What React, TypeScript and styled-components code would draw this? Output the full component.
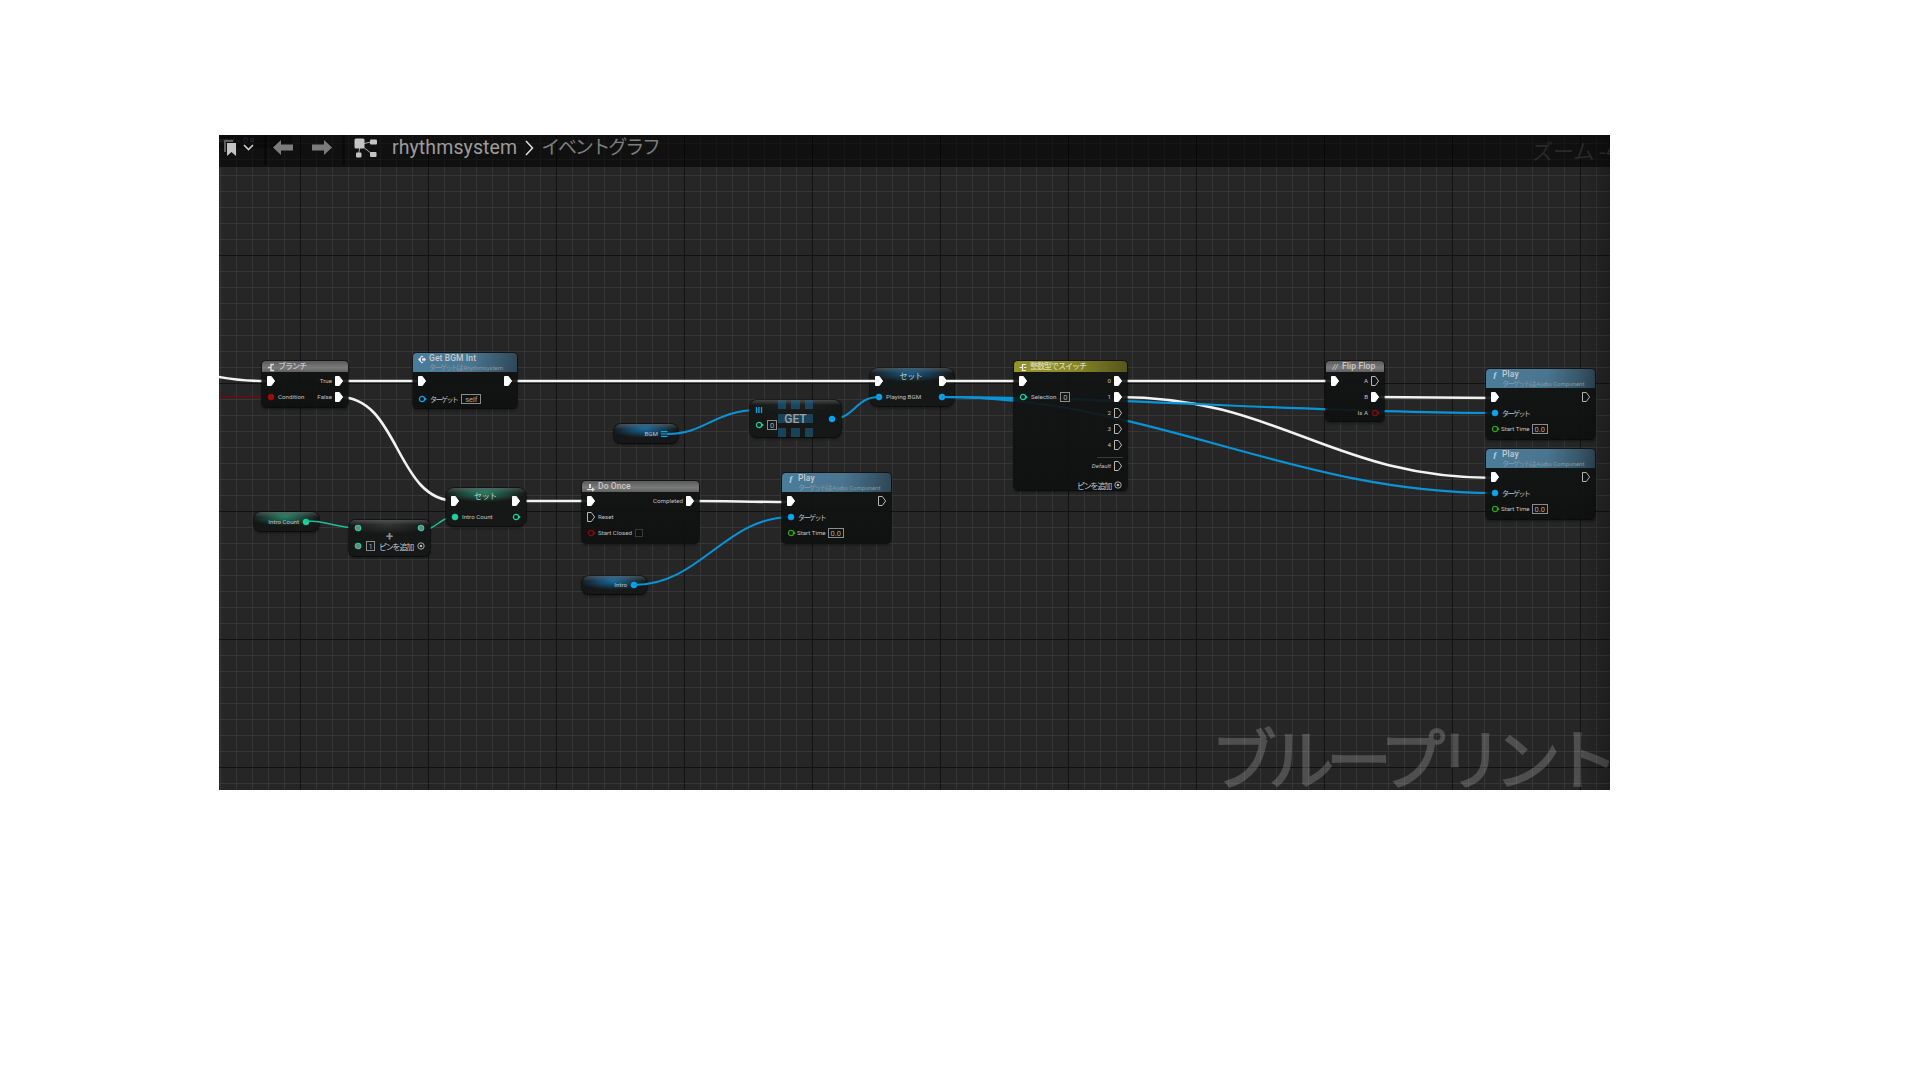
import React from 'react';
import styled, { createGlobalStyle } from 'styled-components';

// page position of the graph panel, node coordinates below are page pixels
const OX = 219;
const OY = 135;

const GlobalStyle = createGlobalStyle`
  html, body {
    margin: 0;
    background: #ffffff;
  }
  body {
    font-family: Roboto, "Noto Sans CJK JP", sans-serif;
  }
`;

const Page = styled.div`
  width: 1920px;
  height: 1080px;
  padding: ${OY}px 0 0 ${OX}px;
  box-sizing: border-box;
`;

const Canvas = styled.div`
  position: relative;
  width: 1391px;
  height: 655px;
  overflow: hidden;
  background-color: #262626;
  background-image:
    linear-gradient(to right, #121212 1px, transparent 1px),
    linear-gradient(to bottom, #121212 1px, transparent 1px),
    linear-gradient(to right, #363636 1px, transparent 1px),
    linear-gradient(to bottom, #363636 1px, transparent 1px);
  background-size: 128px 128px, 128px 128px, 16px 16px, 16px 16px;
  background-position: 81px 0, 0 120px, 1px 0, 0 8px;
  &::after {
    content: '';
    position: absolute;
    inset: 0;
    pointer-events: none;
    background: linear-gradient(to left, rgba(0, 0, 0, 0.22), transparent 30px);
  }
`;

const Toolbar = styled.div`
  position: relative;
  z-index: 3;
  display: flex;
  align-items: center;
  height: 32px;
  background: rgba(0, 0, 0, 0.56);
  padding: 0 0 7px 5px;
  box-sizing: border-box;
`;

const GhostTab = styled.div`
  position: absolute;
  left: 0;
  top: 0;
  width: 73px;
  height: 13px;
  background: rgba(0, 0, 0, 0.28);
  color: #3c3c3c;
  font-size: 6px;
  line-height: 9px;
`;

const ToolIcon = styled.svg<{ $ml?: number }>`
  position: relative;
  flex: none;
  margin-left: ${(p) => p.$ml ?? 0}px;
`;

const ToolSep = styled.div<{ $ml: number }>`
  flex: none;
  width: 3px;
  height: 30px;
  align-self: flex-start;
  margin-left: ${(p) => p.$ml}px;
  background: rgba(0, 0, 0, 0.35);
`;

const Crumb = styled.span`
  margin-left: 15px;
  font-family: Roboto, sans-serif;
  font-size: 19.5px;
  color: #9c9c9c;
  letter-spacing: 0.1px;
`;

const CrumbNow = styled.span`
  margin: 0 0 4px 7px;
  font-family: "Noto Sans CJK JP", sans-serif;
  font-size: 19px;
  line-height: 20px;
  letter-spacing: -2.2px;
  color: #7d7d7d;
`;

const Zoom = styled.span`
  position: absolute;
  right: -8px;
  top: 0;
  font-family: "Noto Sans CJK JP", sans-serif;
  font-size: 21px;
  line-height: 30px;
  white-space: nowrap;
  color: #2a2a2a;
`;

const Watermark = styled.div`
  position: absolute;
  right: 0;
  bottom: 0;
  font-family: "Noto Sans CJK JP", sans-serif;
  font-size: 66px;
  line-height: 70px;
  font-weight: 400;
  white-space: nowrap;
  color: #ffffff;
  -webkit-text-stroke: 1.6px #ffffff;
  opacity: 0.19;
  letter-spacing: -8.4px;
`;

const Wires = styled.svg`
  position: absolute;
  left: 0;
  top: 0;
  width: 1391px;
  height: 655px;
  fill: none;
  stroke-linecap: round;
`;

const Wire = styled.path<{ $c: string; $w: number }>`
  stroke: ${(p) => p.$c};
  stroke-width: ${(p) => p.$w}px;
`;

const Node = styled.div<{ $x: number; $y: number; $w: number; $h: number; $r?: number }>`
  position: absolute;
  left: ${(p) => p.$x - OX}px;
  top: ${(p) => p.$y - OY}px;
  width: ${(p) => p.$w}px;
  height: ${(p) => p.$h}px;
  box-sizing: border-box;
  display: flex;
  flex-direction: column;
  border-radius: ${(p) => p.$r ?? 4}px;
  background: linear-gradient(180deg, rgba(18, 20, 19, 0.9), rgba(14, 16, 15, 0.93));
  box-shadow: 0 0 0 1px rgba(0, 0, 0, 0.45), 0 2px 3px rgba(0, 0, 0, 0.45);
  color: #c0c0c0;
  font-size: 6.2px;
  font-weight: 400;
`;

const PureNode = styled(Node)<{ $tint: string }>`
  padding-top: 5px;
  background:
    linear-gradient(180deg, rgba(255, 255, 255, 0.2), transparent 5px),
    radial-gradient(ellipse 52% 9px at 48% 5px, ${(p) => p.$tint}, transparent),
    #161817;
`;

const Header = styled.div<{ $kind: 'grey' | 'blue' | 'olive'; $tall?: boolean }>`
  flex: none;
  height: ${(p) => (p.$tall ? 19 : 11)}px;
  display: flex;
  align-items: flex-start;
  gap: 3px;
  padding: 0 0 0 5px;
  border-radius: 4px 4px 0 0;
  box-sizing: border-box;
  color: ${(p) => (p.$kind === 'olive' ? '#d9d9b8' : '#c9c9c9')};
  background: ${(p) =>
    p.$kind === 'blue'
      ? 'linear-gradient(100deg, #4a7d9c, #4a7590 55%, #2e4655 100%)'
      : p.$kind === 'olive'
        ? 'linear-gradient(90deg, #94942a, #8a8a28 50%, #56561c 100%)'
        : 'linear-gradient(180deg, #5a5a5a, #7a7a7a 60%, #5e5e5e)'};
`;

const HeaderIcon = styled.span<{ $light?: boolean }>`
  flex: none;
  width: 8px;
  height: 11px;
  display: flex;
  align-items: center;
  justify-content: center;
  font: italic 700 9px "Liberation Serif", serif;
  color: ${(p) => (p.$light ? '#d8d8d8' : '#a8d4ee')};
`;

const HeaderText = styled.div`
  display: flex;
  flex-direction: column;
  font-weight: 500;
`;

const Title = styled.span`
  font-size: 8.5px;
  line-height: 10px;
  font-weight: 500;
  letter-spacing: 0.1px;
  white-space: nowrap;
`;

const TitleJa = styled(Title)`
  font-family: "Noto Sans CJK JP", sans-serif;
  font-size: 8px;
  letter-spacing: -1px;
`;

const Subtitle = styled.span`
  font-size: 6px;
  line-height: 8px;
  white-space: nowrap;
  color: #86999f;
  font-weight: 400;
`;

const Ja = styled.span`
  font-family: "Noto Sans CJK JP", sans-serif;
  font-size: 7px;
  letter-spacing: -0.22em;
`;

const Body = styled.div`
  padding-top: 1px;
  display: flex;
  flex-direction: column;
`;

const Row = styled.div<{ $mt?: number; $h?: number; $pr?: number; $end?: boolean }>`
  display: flex;
  align-items: center;
  justify-content: ${(p) => (p.$end ? 'flex-end' : 'space-between')};
  height: ${(p) => p.$h ?? 16}px;
  margin-top: ${(p) => p.$mt ?? 0}px;
  padding: 0 ${(p) => p.$pr ?? 5}px 0 5px;
  white-space: nowrap;
`;

const Side = styled.div<{ $gap?: number }>`
  display: flex;
  align-items: center;
  gap: ${(p) => p.$gap ?? 3}px;
`;

const SetTitle = styled.span`
  transform: translateY(-6px);
  font-family: "Noto Sans CJK JP", sans-serif;
  font-size: 8px;
  letter-spacing: -0.4px;
  color: #bcd0cf;
`;

const VarNode = styled(PureNode)`
  padding: 0 9px 0 0;
  flex-direction: row;
  align-items: center;
  justify-content: flex-end;
  gap: 3px;
`;

const ValueBox = styled.span<{ $w: number }>`
  display: flex;
  align-items: center;
  justify-content: center;
  width: ${(p) => p.$w}px;
  height: 10px;
  box-sizing: border-box;
  border: 1px solid #8c8c8c;
  font-size: 7.5px;
  font-weight: 400;
  color: #a8a8a8;
`;

const CheckBox = styled.span`
  width: 8px;
  height: 8px;
  box-sizing: border-box;
  border: 1px solid #3a3a3a;
  background: #0e0e0e;
`;

const Divider = styled.div`
  margin: 4px 4px 0 83px;
  height: 1px;
  background: #3a3a3a;
`;

const PlusRow = styled.div`
  height: 6px;
  line-height: 6px;
  text-align: center;
  font-size: 13px;
  font-weight: 700;
  color: #8e8e8e;
`;

const AddLabel = styled(Ja)`
  font-size: 8px;
  letter-spacing: -0.15em;
  color: #c8c8c8;
`;

const GetNode = styled(PureNode)`
  padding: 0;
  flex-direction: row;
`;

const GetColumn = styled.div<{ $end?: boolean }>`
  flex: none;
  width: 28px;
  display: flex;
  flex-direction: column;
  justify-content: ${(p) => (p.$end ? 'center' : 'flex-start')};
  align-items: ${(p) => (p.$end ? 'flex-end' : 'flex-start')};
  padding-top: ${(p) => (p.$end ? 0 : 4)}px;
  box-sizing: border-box;
`;

const GetCenter = styled.div`
  position: relative;
  flex: 1;
  display: grid;
  grid-template-columns: repeat(3, 1fr);
  grid-template-rows: repeat(3, 1fr);
  column-gap: 5px;
  row-gap: 5px;
`;

const GetTile = styled.span<{ $wide?: boolean }>`
  background: rgba(28, 110, 155, 0.5);
  margin: ${(p) => (p.$wide ? '0 -5px 0 0' : 0)};
`;

const GetLabel = styled.span`
  position: absolute;
  inset: 0;
  display: flex;
  align-items: center;
  justify-content: center;
  font-size: 12px;
  font-weight: 500;
  color: #a0a0a0;
`;

const PinSvg = styled.svg`
  flex: none;
  width: 8px;
  height: 10px;
  overflow: visible;
  display: block;
`;

const ExecPin = ({ hollow }: { hollow?: boolean }) => (
  <PinSvg viewBox="0 0 8 10">
    <path
      d="M0.5 0.5H4.3L7.6 5L4.3 9.5H0.5Z"
      fill={hollow ? 'none' : '#ffffff'}
      stroke={hollow ? '#b8b8b8' : '#ffffff'}
      strokeWidth="1"
      strokeLinejoin="round"
    />
  </PinSvg>
);

const DataPin = ({ c, hollow }: { c: string; hollow?: boolean }) => (
  <PinSvg viewBox="0 0 8 10">
    <circle cx="4" cy="5" r={hollow ? 2.6 : 3} fill={hollow ? 'none' : c} stroke={c} strokeWidth={hollow ? 1.2 : 0.6} />
    {hollow && <path d="M7 3.6L8.8 5L7 6.4Z" fill={c} />}
  </PinSvg>
);

const ArrayPin = () => (
  <PinSvg viewBox="0 0 8 10">
    <path d="M1.5 2V8M4 2V8M6.5 2V8" stroke="#0aa5ee" strokeWidth="1.3" />
  </PinSvg>
);

const ArrayPinFlat = () => (
  <PinSvg viewBox="0 0 8 10">
    <path d="M0 2.6H6.5M0 5H6.5M0 7.4H6.5" stroke="#0aa5ee" strokeWidth="1.2" />
  </PinSvg>
);

const AddPin = () => (
  <PinSvg viewBox="0 0 8 10">
    <circle cx="4" cy="5" r="3.2" fill="none" stroke="#b8b8b8" strokeWidth="0.9" />
    <circle cx="4" cy="5" r="1.3" fill="#b8b8b8" />
  </PinSvg>
);

const TealPin = () => (
  <PinSvg viewBox="0 0 8 10">
    <circle cx="4" cy="5" r="2.8" fill="#7f7f7f" stroke="#1fd1a0" strokeWidth="1.1" />
  </PinSvg>
);

const BLUE = '#0aa5ee';
const TEAL = '#1fd1a0';
const GREEN = '#2ea80c';
const RED = '#8a0a0a';

const Icon = styled.svg`
  display: block;
  width: 8px;
  height: 9px;
  margin-top: 1px;
`;

const BranchIcon = () => (
  <Icon viewBox="0 0 8 9">
    <path d="M7 1.5H4V7.5H7M1 4.5H4" fill="none" stroke="#dcdcdc" strokeWidth="1.4" />
  </Icon>
);

const FlowIcon = () => (
  <Icon viewBox="0 0 8 9">
    <path d="M0 6H5V4.2L8 6.5L5 8.8V7.2H0ZM2 1H4V5H2Z" fill="#dcdcdc" />
  </Icon>
);

const SwitchIcon = () => (
  <Icon viewBox="0 0 8 9">
    <path d="M7 1.5H3.5V7.5H7M0.5 4.5H3.5M5 4.5H7.5" fill="none" stroke="#eeeeee" strokeWidth="1.2" />
  </Icon>
);

const GetIcon = () => (
  <Icon viewBox="0 0 8 9">
    <path d="M4 0.5L8 4.5L4 8.5L0 4.5Z" fill="#e4eef4" />
    <path d="M6 2.8H3.4V6.2H6" fill="none" stroke="#3a6078" strokeWidth="1" />
  </Icon>
);

const PlayNode = ({ y, x }: { x: number; y: number }) => (
  <Node $x={x} $y={y} $w={109} $h={70}>
    <Header $kind="blue" $tall>
      <HeaderIcon>ƒ</HeaderIcon>
      <HeaderText>
        <Title>Play</Title>
        <Subtitle>
          <Ja>ターゲットは</Ja> Audio Component
        </Subtitle>
      </HeaderText>
    </Header>
    <Body>
      <Row>
        <ExecPin />
        <ExecPin hollow />
      </Row>
      <Row>
        <Side>
          <DataPin c={BLUE} />
          <Ja>ターゲット</Ja>
        </Side>
      </Row>
      <Row>
        <Side $gap={2}>
          <DataPin c={GREEN} hollow />
          <span>Start Time</span>
          <ValueBox $w={16}>0.0</ValueBox>
        </Side>
      </Row>
    </Body>
  </Node>
);

const wiresWhite = [
  'M219 377C235 380 245 381 265 381',
  'M339 381H423',
  'M508 381H879',
  'M943 381H1022',
  'M1117 381H1335',
  'M1375 397C1420 397 1450 398 1495 398',
  'M1117 397C1280 397 1330 478 1495 478',
  'M339 397C400 397 395 501 456 501',
  'M516 501H591',
  'M690 501C730 501 750 502 791 502',
];

const wiresBlue = [
  'M668 434C705 434 715 410 758 410',
  'M831 419C855 419 855 397 879 397',
  'M634 585C700 585 725 517 791 517',
  'M942 397C975 397 990 399 1022 399',
  'M942 397C1130 397 1307 413 1495 413',
  'M942 397C1150 397 1290 493 1495 493',
];

const wiresTeal = [
  'M306 521C330 521 335 528 360 528',
  'M420 530C438 530 438 517 456 517',
];

export default function App() {
  return (
    <Page>
      <GlobalStyle />
      <Canvas>
        {/* pure nodes sit under the wires, their output wires stay bright */}
        <VarNode $x={254} $y={512} $w={65} $h={19} $r={7} $tint="rgba(44, 168, 132, 0.7)">
          <span>Intro Count</span>
          <DataPin c={TEAL} />
        </VarNode>

        <VarNode $x={614} $y={424} $w={64} $h={19} $r={7} $tint="rgba(24, 126, 190, 0.8)">
          <span>BGM</span>
          <ArrayPinFlat />
        </VarNode>

        <VarNode $x={582} $y={576} $w={65} $h={18} $r={7} $tint="rgba(24, 126, 190, 0.8)">
          <span>Intro</span>
          <DataPin c={BLUE} />
        </VarNode>

        <PureNode $x={870} $y={368} $w={84} $h={38} $r={8} $tint="rgba(24, 126, 190, 0.65)">
          <Row $pr={7}>
            <ExecPin />
            <SetTitle>セット</SetTitle>
            <ExecPin />
          </Row>
          <Row $pr={8}>
            <Side>
              <DataPin c={BLUE} />
              <span>Playing BGM</span>
            </Side>
            <DataPin c={BLUE} />
          </Row>
        </PureNode>

        <Wires viewBox={`${OX} ${OY} 1391 655`}>
          {wiresWhite.map((d) => (
            <Wire key={d} d={d} $c="#f2f2f2" $w={2.6} />
          ))}
          {wiresBlue.map((d) => (
            <Wire key={d} d={d} $c="#0a94d8" $w={2.1} />
          ))}
          {wiresTeal.map((d) => (
            <Wire key={d} d={d} $c="#1fbf95" $w={1.5} />
          ))}
          <Wire d="M219 397H271" $c="#6e0c0c" $w={1.6} />
          <Wire d="M1374 413H1384" $c="#0a94d8" $w={1.6} />
        </Wires>

        <Node $x={262} $y={361} $w={86} $h={46}>
          <Header $kind="grey">
            <HeaderIcon>
              <BranchIcon />
            </HeaderIcon>
            <TitleJa>ブランチ</TitleJa>
          </Header>
          <Body>
            <Row>
              <ExecPin />
              <Side>
                <span>True</span>
                <ExecPin />
              </Side>
            </Row>
            <Row>
              <Side>
                <DataPin c="#a00c0c" />
                <span>Condition</span>
              </Side>
              <Side>
                <span>False</span>
                <ExecPin />
              </Side>
            </Row>
          </Body>
        </Node>

        <Node $x={413} $y={353} $w={104} $h={55}>
          <Header $kind="blue" $tall>
            <HeaderIcon>
              <GetIcon />
            </HeaderIcon>
            <HeaderText>
              <Title>Get BGM Int</Title>
              <Subtitle>
                <Ja>ターゲットは</Ja> Rhythmsystem
              </Subtitle>
            </HeaderText>
          </Header>
          <Body>
            <Row>
              <ExecPin />
              <ExecPin />
            </Row>
            <Row $mt={2}>
              <Side $gap={4}>
                <DataPin c={BLUE} hollow />
                <Ja>ターゲット</Ja>
                <ValueBox $w={20}>self</ValueBox>
              </Side>
            </Row>
          </Body>
        </Node>

        <PureNode $x={446} $y={488} $w={80} $h={38} $r={8} $tint="rgba(44, 168, 132, 0.7)">
          <Row $pr={6}>
            <ExecPin />
            <SetTitle>セット</SetTitle>
            <ExecPin />
          </Row>
          <Row $pr={6}>
            <Side>
              <DataPin c={TEAL} />
              <span>Intro Count</span>
            </Side>
            <DataPin c={TEAL} hollow />
          </Row>
        </PureNode>

        <PureNode $x={349} $y={520} $w={81} $h={36} $r={6} $tint="rgba(90, 90, 90, 0.4)">
          <Row $h={12} $mt={-3}>
            <TealPin />
            <TealPin />
          </Row>
          <PlusRow>+</PlusRow>
          <Row $h={12}>
            <Side $gap={4}>
              <TealPin />
              <ValueBox $w={9}>1</ValueBox>
              <AddLabel>ピンを追加</AddLabel>
            </Side>
            <AddPin />
          </Row>
        </PureNode>

        <GetNode $x={750} $y={400} $w={91} $h={37} $r={7} $tint="rgba(70, 70, 70, 0.2)">
          <GetColumn>
            <Row $h={12}>
              <ArrayPin />
            </Row>
            <Row $h={12} $mt={3}>
              <Side $gap={4}>
                <DataPin c={TEAL} hollow />
                <ValueBox $w={10}>0</ValueBox>
              </Side>
            </Row>
          </GetColumn>
          <GetCenter>
            {[0, 1, 2].map((i) => (
              <GetTile key={`t${i}`} />
            ))}
            {[0, 1, 2].map((i) => (
              <GetTile key={`m${i}`} $wide={i < 2} />
            ))}
            {[0, 1, 2].map((i) => (
              <GetTile key={`b${i}`} />
            ))}
            <GetLabel>GET</GetLabel>
          </GetCenter>
          <GetColumn $end>
            <Row>
              <DataPin c={BLUE} />
            </Row>
          </GetColumn>
        </GetNode>

        <Node $x={582} $y={481} $w={117} $h={62}>
          <Header $kind="grey">
            <HeaderIcon>
              <FlowIcon />
            </HeaderIcon>
            <Title>Do Once</Title>
          </Header>
          <Body>
            <Row>
              <ExecPin />
              <Side>
                <span>Completed</span>
                <ExecPin />
              </Side>
            </Row>
            <Row>
              <Side>
                <ExecPin hollow />
                <span>Reset</span>
              </Side>
            </Row>
            <Row>
              <Side>
                <DataPin c={RED} hollow />
                <span>Start Closed</span>
                <CheckBox />
              </Side>
            </Row>
          </Body>
        </Node>

        <PlayNode x={782} y={473} />

        <Node $x={1014} $y={361} $w={113} $h={129}>
          <Header $kind="olive">
            <HeaderIcon>
              <SwitchIcon />
            </HeaderIcon>
            <TitleJa>整数型でスイッチ</TitleJa>
          </Header>
          <Body>
            <Row>
              <ExecPin />
              <Side>
                <span>0</span>
                <ExecPin />
              </Side>
            </Row>
            <Row>
              <Side $gap={4}>
                <DataPin c={TEAL} hollow />
                <span>Selection</span>
                <ValueBox $w={10}>0</ValueBox>
              </Side>
              <Side>
                <span>1</span>
                <ExecPin />
              </Side>
            </Row>
            {['2', '3', '4'].map((n) => (
              <Row key={n} $end>
                <Side>
                  <span>{n}</span>
                  <ExecPin hollow />
                </Side>
              </Row>
            ))}
            <Divider />
            <Row $end>
              <Side>
                <i>Default</i>
                <ExecPin hollow />
              </Side>
            </Row>
            <Row $h={10} $mt={6} $end>
              <Side>
                <AddLabel>ピンを追加</AddLabel>
                <AddPin />
              </Side>
            </Row>
          </Body>
        </Node>

        <Node $x={1326} $y={361} $w={58} $h={60}>
          <Header $kind="grey">
            <HeaderIcon $light>//</HeaderIcon>
            <Title>Flip Flop</Title>
          </Header>
          <Body>
            <Row>
              <ExecPin />
              <Side>
                <span>A</span>
                <ExecPin hollow />
              </Side>
            </Row>
            <Row $end>
              <Side>
                <span>B</span>
                <ExecPin />
              </Side>
            </Row>
            <Row $end>
              <Side>
                <span>Is A</span>
                <DataPin c={RED} hollow />
              </Side>
            </Row>
          </Body>
        </Node>

        <PlayNode x={1486} y={369} />
        <PlayNode x={1486} y={449} />

        <Toolbar>
          <GhostTab>ormal ⌄ ⊙ Q</GhostTab>
          <ToolIcon width="12" height="16" viewBox="0 0 12 16">
            <path d="M0 0H9V2H2V12H0Z" fill="#5e5e5e" />
            <path d="M3 3H12V16L7.5 12L3 16Z" fill="#c4c4c4" />
          </ToolIcon>
          <ToolIcon $ml={7} width="11" height="7" viewBox="0 0 11 7">
            <path d="M1 1L5.5 5.5L10 1" fill="none" stroke="#c8c8c8" strokeWidth="1.7" />
          </ToolIcon>
          <ToolSep $ml={10} />
          <ToolIcon $ml={6} width="20" height="15" viewBox="0 0 20 15">
            <path d="M0 7.5L8 0V4.5H20V10.5H8V15Z" fill="#7c7c7c" />
          </ToolIcon>
          <ToolIcon $ml={19} width="20" height="15" viewBox="0 0 20 15">
            <path d="M20 7.5L12 0V4.5H0V10.5H12V15Z" fill="#7c7c7c" />
          </ToolIcon>
          <ToolSep $ml={10} />
          <ToolIcon $ml={9} width="23" height="20" viewBox="0 0 23 20">
            <path d="M8 6L19 3.5M6 9L4.5 16M8 8L18 16" stroke="#aaaaaa" strokeWidth="1" />
            <rect x="0.5" y="0.5" width="10" height="10" rx="1.5" fill="#c4c4c4" />
            <rect x="16" y="1.5" width="7" height="5" rx="1" fill="#c4c4c4" />
            <rect x="2" y="14.5" width="5.5" height="5" rx="1" fill="#c4c4c4" />
            <rect x="16" y="14" width="6.5" height="5" rx="1" fill="#c4c4c4" />
          </ToolIcon>
          <Crumb>rhythmsystem</Crumb>
          <ToolIcon $ml={8} width="9" height="16" viewBox="0 0 9 16">
            <path d="M1 1L7.5 8L1 15" fill="none" stroke="#e0e0e0" strokeWidth="1.5" />
          </ToolIcon>
          <CrumbNow>イベントグラフ</CrumbNow>
          <Zoom>ズーム -4</Zoom>
        </Toolbar>

        <Watermark>ブループリント</Watermark>
      </Canvas>
    </Page>
  );
}
